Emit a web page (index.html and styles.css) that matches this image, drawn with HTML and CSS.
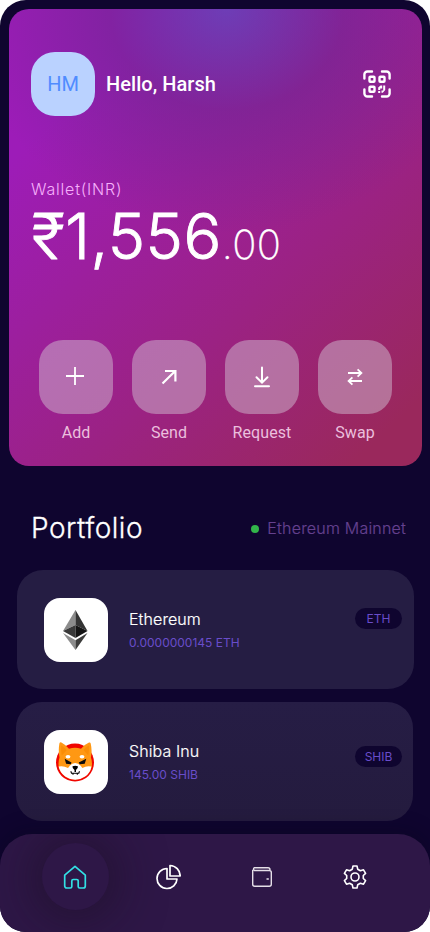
FILE: index.html
```html
<!DOCTYPE html>
<html lang="en">
<head>
<meta charset="utf-8">
<title>Wallet</title>
<link rel="stylesheet" href="styles.css">
</head>
<body>
<div class="screen">
  <section class="wallet">
    <header class="profile">
      <div class="avatar">HM</div>
      <h1 class="hello">Hello, Harsh</h1>
      <svg class="qr" width="28" height="28" viewBox="0 0 28 28" fill="none" stroke="#fff" stroke-width="2.4" stroke-linecap="round">
        <path d="M1.4 8.500V4.500a3 3 0 0 1 3-3H9M19 1.500h4.600a3 3 0 0 1 3 3v4M1.400 19.500v4a3 3 0 0 0 3 3H9M19 26.500h4.600a3 3 0 0 0 3-3v-4"/>
        <rect x="6.500" y="6.700" width="5" height="5" rx=".8"/><rect x="16.500" y="6.700" width="5" height="5" rx=".8"/><rect x="6.500" y="16.700" width="5" height="5" rx=".8"/>
        <path stroke="none" fill="#fff" d="M15.200 17.500l2.300-2h1.700v3h-2v1.500h-2zM20.200 15.500h2v4.500l-2.400 2.700h-1.300v-2.200h1.700zM15.200 21h2v2h-2z"/>
      </svg>
    </header>
    <div class="label">Wallet(INR)</div>
    <div class="balance"><span class="whole">₹1,556</span><span class="cents">.00</span></div>
    <div class="actions">
      <div class="action"><div class="tile"><svg width="24" height="24" viewBox="0 0 24 24"><path d="M11 2v18M2 11h18" stroke-width="1.800"/></svg></div><span>Add</span></div>
      <div class="action"><div class="tile"><svg width="24" height="24" viewBox="0 0 24 24"><path d="M5.500 18.500L18.200 6M8 6h10.400v10.500" stroke-width="2.200"/></svg></div><span>Send</span></div>
      <div class="action"><div class="tile"><svg width="24" height="24" viewBox="0 0 24 24"><path d="M12 2.500v15M6.500 12.300l5.500 5.400 5.500-5.400M5 21.300h14" stroke-width="2" stroke-linecap="round"/></svg></div><span>Request</span></div>
      <div class="action"><div class="tile"><svg width="24" height="24" viewBox="0 0 24 24"><path d="M5 8h13.500M14.600 4.400l3.800 3.600-3.800 3.600M19 16H5.500M9.400 12.400l-3.800 3.600 3.800 3.600" stroke-width="1.800"/></svg></div><span>Swap</span></div>
    </div>
  </section>

  <section class="portfolio">
    <div class="heading">
      <h2>Portfolio</h2>
      <div class="network"><i class="dot"></i><span>Ethereum Mainnet</span></div>
    </div>
    <article class="asset">
      <div class="coin">
        <svg width="64" height="64" viewBox="0 0 64 64">
          <path fill="#8c8c8c" d="M31.500 12v15L19 33z"/><path fill="#343434" d="M31.500 12L43.500 33l-12-6z"/>
          <path fill="#393939" d="M31.500 27v13L19 33z"/><path fill="#141414" d="M31.500 27l12 6-12 7z"/>
          <path fill="#8c8c8c" d="M19 35l12.500 7.300V52z"/><path fill="#3c3c3b" d="M43.500 35l-12 7.300V52z"/>
        </svg>
      </div>
      <div class="info"><h3>Ethereum</h3><p>0.0000000145 ETH</p></div>
      <span class="tag">ETH</span>
    </article>
    <article class="asset shib">
      <div class="coin">
        <svg width="64" height="64" viewBox="0 0 64 64">
          <circle cx="31" cy="32.500" r="19" fill="#f00500"/>
          <path fill="#ff9813" d="M15.400 13.500q.5-1.700 2-1 5 2.700 7.600 6.300 6-2 12 0 3.500-4.400 8-6.300 1.400-.5 1.700 1 1.700 7.500.2 14 1.600 3.800.8 9.500-2.200 6.700-7 9.500-4.200 3-9.700 3-5.800 0-10-3.200-4.600-3.300-6.300-9.800-.6-5 .8-9-1.400-7-.1-14z"/>
          <path fill="#fa8d06" d="M17.300 15.600q3.500 2 5.400 4.700l-5 5.200q-1-5-.4-9.900zM44.800 15.600q-3.500 2-5.300 4.500l4.800 5.400q1.200-5 .5-9.900z"/>
          <path fill="#fff" d="M14.600 36.500q5-1 9.400 1.500l2-2.500q2-2.500 5.200-2.500t5.200 2.500l2 2.500q4-2.500 9-1.500-1 6.500-6.300 10-4.400 3.200-9.900 3.200t-10-3.200q-5.400-4-6.600-10z"/>
          <ellipse cx="24" cy="26.800" rx="2.400" ry="1.800" fill="#fff"/><ellipse cx="38" cy="26.800" rx="2.400" ry="1.800" fill="#fff"/>
          <path fill="#0b0b0b" d="M20.700 28.800l6.800 3.600-.7 1.800-4.700-.5zM42.300 28.800l-7.600 3.700 1 1.700 5-.5z"/>
          <path fill="#000" d="M28.500 36.300q2.700-1 5.400 0 .5 1.700-1.900 3.800v2h-1.500v-2q-2.500-2-2-3.800z"/>
          <path d="M26.800 41.300l.7 2h7.300l.7-2M29 43v1.700M33.300 43v1.700" fill="none" stroke="#000" stroke-width="1.100"/>
        </svg>
      </div>
      <div class="info"><h3>Shiba Inu</h3><p>145.00 SHIB</p></div>
      <span class="tag">SHIB</span>
    </article>
  </section>

  <nav class="tabs">
    <a class="tab active"><svg width="24" height="24" viewBox="0 0 24 24"><path stroke-width="1.700" d="M1.700 10.200L12 1.300l10.300 8.900V21a2 2 0 0 1-2 2h-3.600a1.500 1.500 0 0 1-1.500-1.500V16a1.500 1.500 0 0 0-1.500-1.500h-3.400A1.500 1.500 0 0 0 8.800 16v5.500A1.500 1.500 0 0 1 7.300 23H3.700a2 2 0 0 1-2-2z"/></svg></a>
    <a class="tab"><svg width="26" height="26" viewBox="0 0 26 26"><path stroke-width="1.700" d="M12 4.500A10 10 0 1 0 22 15H12zM15 1.500V12h10.200A10.600 10.600 0 0 0 15 1.500z"/></svg></a>
    <a class="tab"><svg width="22" height="22" viewBox="0 0 22 22"><path stroke-width="1.400" stroke="#e5dfe8" d="M1.700 3.700v14.600a2 2 0 0 0 2 2h14.600a2 2 0 0 0 2-2V6.500a2 2 0 0 0-2-2H3.500a1.500 1.500 0 0 1 0-2.800H17a2 2 0 0 1 2 2v.8M15.500 13h2.300"/></svg></a>
    <a class="tab"><svg width="24" height="24" viewBox="0 0 24 24"><g transform="translate(12 12)"><path stroke-width="1.600" d="M-2-11H2L2.700-7.800L5.400-6.200L8.500-7.200L10.600-3.700L8.300-1.500V1.500L10.600 3.700L8.500 7.200L5.400 6.200L2.700 7.800L2 11H-2L-2.700 7.800L-5.400 6.200L-8.500 7.200L-10.600 3.700L-8.300 1.500V-1.500L-10.600-3.700L-8.500-7.200L-5.400-6.200L-2.700-7.800Z"/><circle r="4" stroke-width="1.600"/></g></svg></a>
  </nav>
</div>
</body>
</html>
```
FILE: styles.css
```css
* { box-sizing: border-box; }
body { margin: 0; background: #fff; font-family: Inter, sans-serif; }
h1, h2, h3, p { margin: 0; font-weight: 400; }
svg { display: block; flex: none; }

.screen {
  width: 430px; height: 932px; padding-top: 9px;
  display: flex; flex-direction: column;
  background: #0f052f; border-radius: 26px; overflow: hidden;
}
.wallet {
  flex: none; width: 413px; height: 457px; margin-left: 9px; padding-top: 43px;
  border-radius: 20px;
  background:
    radial-gradient(ellipse 260px 225px at 218px 0, rgba(94,72,184,.75), rgba(103,40,140,.5) 45%, rgba(110,30,120,0)),
    linear-gradient(137deg, #9d1cb8 18%, #9b2283 62%, #9a285c 92%);
}
.profile { display: flex; align-items: center; height: 64px; padding: 0 31px 0 22px; }
.avatar {
  width: 64px; height: 64px; border-radius: 24px; background: #bad2ff; color: #508cff;
  font: 400 20px/64px Roboto, sans-serif; text-align: center;
}
.hello { margin-left: 11px; color: #fff; font: 500 20px/24px Roboto, sans-serif; letter-spacing: .05px; }
.qr { margin-left: auto; }
.label {
  margin: 61px 0 0 22px; height: 24px; color: #f6b0fb;
  font-size: 16px; line-height: 24px; font-weight: 300; letter-spacing: .8px;
}
.balance {
  display: flex; align-items: baseline; height: 64px; margin: 0 0 0 23px;
  color: #fff; font-size: 63px; line-height: 70px; white-space: nowrap;
}
.whole { font-weight: 300; letter-spacing: .45px; -webkit-text-stroke: .9px #fff; }
.cents { font-size: 40px; font-weight: 200; letter-spacing: .4px; -webkit-text-stroke: .3px #fff; }
.actions { display: flex; gap: 19px; margin: 75px 0 0 30px; }
.action { width: 74px; display: flex; flex-direction: column; align-items: center; }
.action span { margin-top: 9px; color: #ebbfdd; font: 400 16px/20px Roboto, sans-serif; letter-spacing: .08px; }
.tile {
  width: 74px; height: 74px; border-radius: 24px; background: rgba(207,187,207,.5);
  display: flex; align-items: center; justify-content: center;
}
.tile svg { fill: none; stroke: #fff; }

.portfolio { flex: none; height: 368px; }
.heading { display: flex; align-items: center; justify-content: space-between; height: 34px; margin-top: 45px; padding: 0 24px 0 31px; }
.heading h2 { color: #fff; font-size: 28px; font-weight: 300; line-height: 34px; letter-spacing: .5px; -webkit-text-stroke: .3px #fff; }
.network { display: flex; align-items: center; gap: 8px; color: #65418f; font-size: 16px; font-weight: 300; line-height: 20px; letter-spacing: .2px; -webkit-text-stroke: .2px #65418f; }
.dot { width: 8px; height: 8px; margin-top: 1px; border-radius: 50%; background: #32b54a; }
.asset {
  display: flex; align-items: center; width: 397px; height: 119px; margin: 25px 0 0 17px; padding: 0 12px 0 27px;
  border-radius: 26px; background: #251d43;
}
.asset.shib { margin: 13px 0 0 16px; padding: 0 11px 0 28px; background: linear-gradient(#261d45, #241b3e); }
.coin { flex: none; width: 64px; height: 64px; border-radius: 16px; background: #fff; }
.info { margin: -1px 0 0 21px; }
.info h3 { color: #fff; font-size: 16px; font-weight: 300; line-height: 24px; letter-spacing: .1px; -webkit-text-stroke: .2px #fff; }
.info p { color: #694dca; font-size: 12px; line-height: 16px; margin-top: 4px; }
.tag {
  width: 47px; height: 21px; margin: -22px 0 0 auto; border-radius: 10.5px; background: #0f052f;
  color: #694dca; font-size: 12px; line-height: 21px; text-align: center;
}
.shib .tag { margin-top: -10px; }

.tabs {
  flex: none; display: grid; grid-template-columns: repeat(4, 93.3px); justify-content: center; align-items: center;
  height: 98px; padding-bottom: 13px; border-radius: 32px 32px 0 0; background: #2e1747; overflow: hidden;
  box-shadow: 0 -3px 20px rgba(10,5,25,.35);
}
.tab { width: 67px; height: 67px; margin: 0 auto; display: flex; align-items: center; justify-content: center; border-radius: 50%; }
.tab svg { fill: none; stroke: #fff; stroke-linejoin: round; }
.active { background: #2e1747; box-shadow: 0 2px 48px 8px rgba(24,14,28,.5); }
.active svg { stroke: #32e0e4; }
```
